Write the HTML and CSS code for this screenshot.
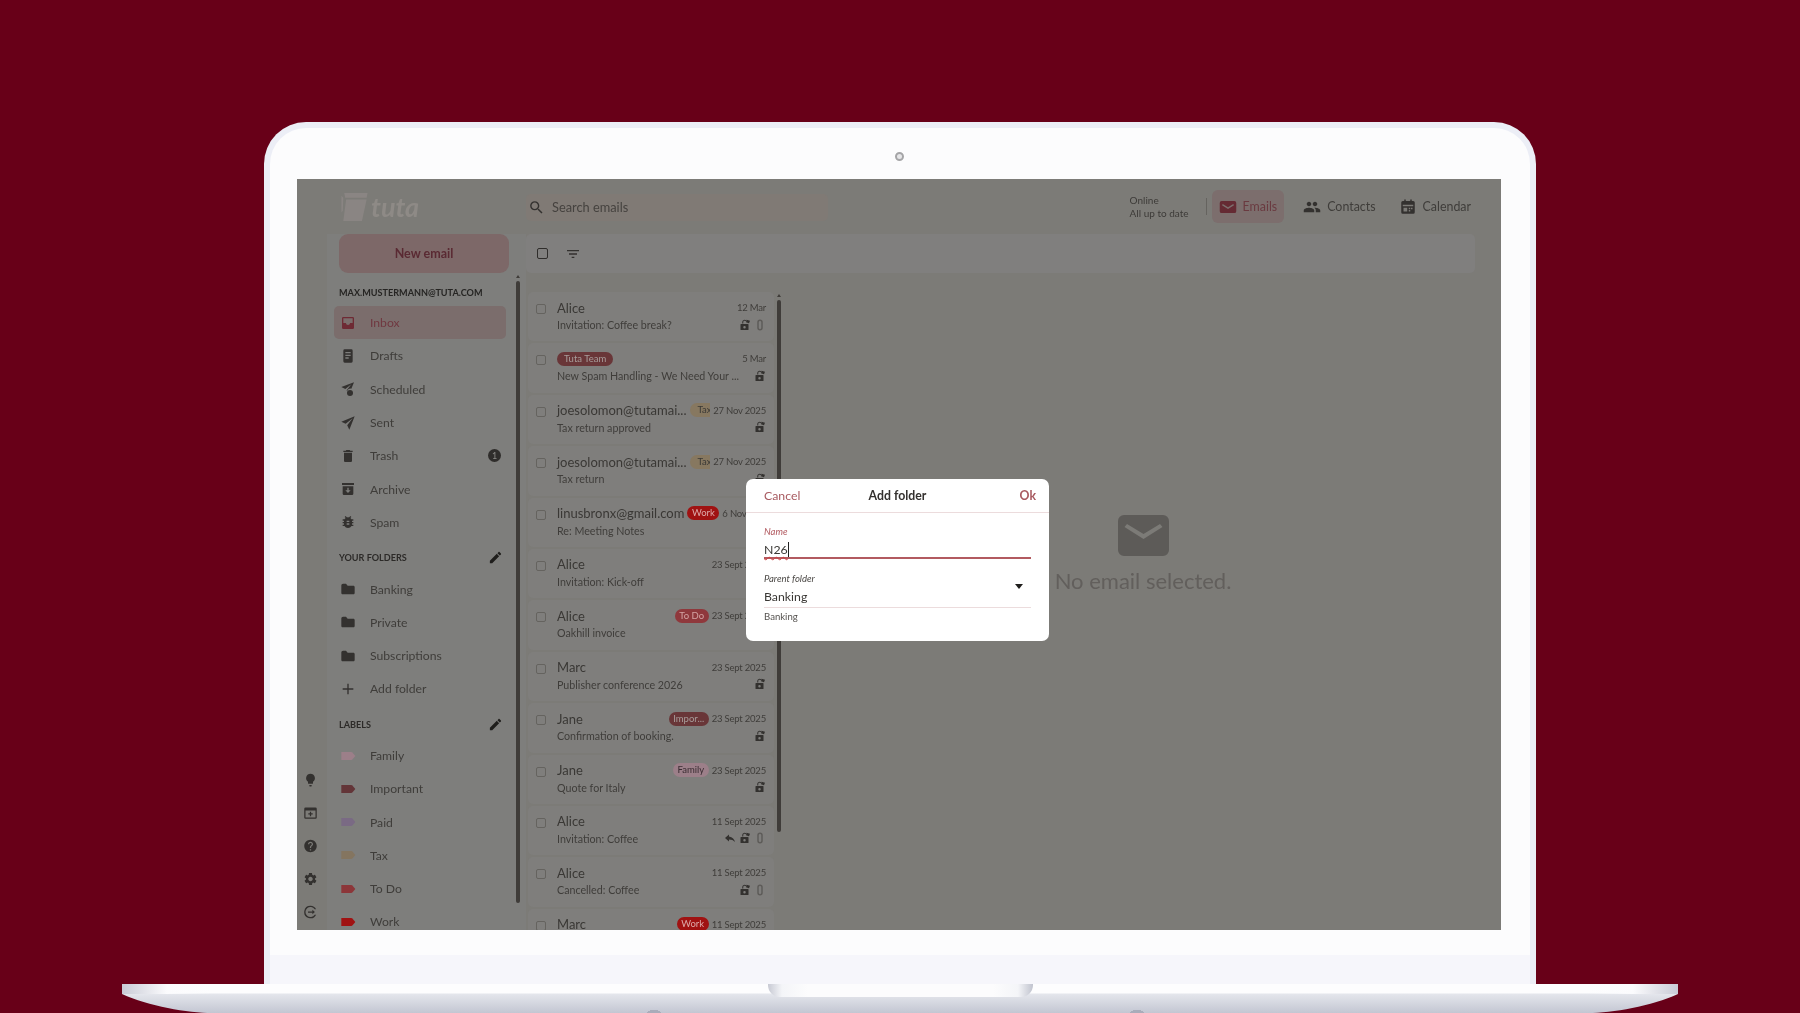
FILE: index.html
```html
<!DOCTYPE html>
<html lang="en">
<head>
    <meta charset="UTF-8">
    <title>Tuta - Add folder</title>
    <link rel="stylesheet" href="styles.css">
</head>
<body>
    <svg class="defs" width="0" height="0">
        <symbol id="i-inbox" viewBox="0 0 24 24"><path d="M5 3h14a2 2 0 0 1 2 2v14a2 2 0 0 1-2 2H5a2 2 0 0 1-2-2V5a2 2 0 0 1 2-2zm0 2v7h4c0 1.7 1.3 3 3 3s3-1.3 3-3h4V5z"/></symbol>
        <symbol id="i-draft" viewBox="0 0 24 24"><path fill-rule="evenodd" d="M7 2h10a2 2 0 0 1 2 2v16a2 2 0 0 1-2 2H7a2 2 0 0 1-2-2V4a2 2 0 0 1 2-2zm1 4v2h8V6zm0 4v2h8v-2zm0 4v2h5v-2z"/></symbol>
        <symbol id="i-sent" viewBox="0 0 24 24"><path d="M22 2 2 10l6.500 3.200L19 5l-8.200 10.500L14 22z"/></symbol>
        <symbol id="i-sched" viewBox="0 0 24 24"><path d="M21 2 2 9l6 3 9-7-7 9 .6 1.400A5 5 0 0 1 17 11.500z"/><circle cx="15" cy="18" r="4.500"/></symbol>
        <symbol id="i-trash" viewBox="0 0 24 24"><path d="M6 19c0 1.100.9 2 2 2h8c1.100 0 2-.9 2-2V7H6v12zM19 4h-3.500l-1-1h-5l-1 1H5v2h14V4z"/></symbol>
        <symbol id="i-archive" viewBox="0 0 24 24"><path fill-rule="evenodd" d="M3 3h18v3H3zM4 8h16v11a2 2 0 0 1-2 2H6a2 2 0 0 1-2-2zm7 2v4H8l4 4 4-4h-3v-4z"/></symbol>
        <symbol id="i-bug" viewBox="0 0 24 24"><path fill-rule="evenodd" d="M20 8h-2.810c-.45-.78-1.070-1.450-1.820-1.960L17 4.410 15.590 3l-2.170 2.170C12.960 5.060 12.490 5 12 5c-.49 0-.96.06-1.410.17L8.410 3 7 4.410l1.620 1.630C7.880 6.550 7.260 7.220 6.810 8H4v2h2.090c-.05.33-.09.66-.09 1v1H4v2h2v1c0 .34.04.67.09 1H4v2h2.810c1.040 1.790 2.970 3 5.190 3s4.150-1.210 5.190-3H20v-2h-2.090c.05-.33.09-.66.09-1v-1h2v-2h-2v-1c0-.34-.04-.67-.09-1H20V8zm-6 8h-4v-2h4zm0-4h-4v-2h4z"/></symbol>
        <symbol id="i-folder" viewBox="0 0 24 24"><path d="M9 4H4.500A2.500 2.500 0 0 0 2 6.500V18c0 1.100.9 2 2 2h16c1.100 0 2-.9 2-2V9c0-1.100-.9-2-2-2h-8.500z"/></symbol>
        <symbol id="i-plus" viewBox="0 0 24 24"><path d="M20 13h-7v7h-2v-7H4v-2h7V4h2v7h7z"/></symbol>
        <symbol id="i-pencil" viewBox="0 0 24 24"><path d="M3 17.250V21h3.750L17.810 9.940l-3.750-3.750L3 17.250zM20.710 7.040c.39-.39.39-1.020 0-1.410l-2.340-2.340c-.39-.39-1.020-.39-1.410 0l-1.830 1.830 3.750 3.750 1.830-1.830z"/></symbol>
        <symbol id="i-label" viewBox="0 0 24 24"><path d="M2 6h15c.6 0 1.100.3 1.500.7L23 12l-4.500 5.300c-.4.4-.9.7-1.500.7H2z"/></symbol>
        <symbol id="i-bulb" viewBox="0 0 24 24"><path d="M10 20h4l-.5 2.500h-3zM12 2a7 7 0 0 0-4 12.740V17c0 .55.45 1 1 1h6c.55 0 1-.45 1-1v-2.260A7 7 0 0 0 12 2z"/></symbol>
        <symbol id="i-window" viewBox="0 0 24 24"><path fill-rule="evenodd" d="M4 3h16a2 2 0 0 1 2 2v14a2 2 0 0 1-2 2H4a2 2 0 0 1-2-2V5a2 2 0 0 1 2-2zm0 5v11h16V8zm7 2h2v2.500h2.500v2H13V17h-2v-2.500H8.500v-2H11z"/></symbol>
        <symbol id="i-help" viewBox="0 0 24 24"><path d="M12 2C6.480 2 2 6.480 2 12s4.480 10 10 10 10-4.480 10-10S17.520 2 12 2zm1 17h-2v-2h2v2zm2.070-7.750l-.9.92C13.450 12.900 13 13.500 13 15h-2v-.5c0-1.100.45-2.100 1.170-2.830l1.240-1.260c.37-.36.59-.86.59-1.410 0-1.100-.9-2-2-2s-2 .9-2 2H8c0-2.210 1.790-4 4-4s4 1.790 4 4c0 .88-.36 1.680-.93 2.250z"/></symbol>
        <symbol id="i-gear" viewBox="0 0 24 24"><path d="M19.140 12.940c.04-.3.06-.61.06-.94 0-.32-.02-.64-.07-.94l2.030-1.580c.18-.14.23-.41.12-.61l-1.920-3.320c-.12-.22-.37-.29-.59-.22l-2.390.96c-.5-.38-1.030-.7-1.620-.94l-.36-2.540c-.04-.24-.24-.41-.48-.41h-3.840c-.24 0-.43.17-.47.41l-.36 2.540c-.59.24-1.130.57-1.620.94l-2.390-.96c-.22-.08-.47 0-.59.22L2.740 8.870c-.12.21-.08.47.12.61l2.030 1.580c-.05.3-.09.63-.09.94s.02.64.07.94l-2.030 1.580c-.18.14-.23.41-.12.61l1.920 3.320c.12.22.37.29.59.22l2.390-.96c.5.38 1.030.7 1.620.94l.36 2.540c.05.24.24.41.48.41h3.840c.24 0 .44-.17.47-.41l.36-2.540c.59-.24 1.130-.56 1.620-.94l2.390.96c.22.08.47 0 .59-.22l1.920-3.320c.12-.22.07-.47-.12-.61l-2.010-1.580zM12 15.600c-1.980 0-3.600-1.620-3.600-3.600s1.620-3.600 3.600-3.600 3.600 1.620 3.600 3.600-1.620 3.600-3.600 3.600z"/></symbol>
        <symbol id="i-logout" viewBox="0 0 24 24"><path d="M12 2a10 10 0 1 0 9 14.300h-2.300A8 8 0 1 1 18.700 7.700H21A10 10 0 0 0 12 2zM15 8.500V11H8v2h7v2.500l4-3.500z"/></symbol>
        <symbol id="i-lock" viewBox="0 0 24 24"><path fill-rule="evenodd" d="M4 10h14a1 1 0 0 1 1 1v10a1 1 0 0 1-1 1H4a1 1 0 0 1-1-1V11a1 1 0 0 1 1-1zm7 4a2.500 2.500 0 1 0 0 5 2.500 2.500 0 0 0 0-5zM6.500 9V6a4.500 4.500 0 0 1 8-2.800L13 4.600A2.500 2.500 0 0 0 8.500 6v3zM15 1.500l7 2-2 5-6-2z"/></symbol>
        <symbol id="i-clip" viewBox="0 0 24 24"><path fill-rule="evenodd" d="M12 1a5.500 5.500 0 0 0-5.500 5.500v11a5.500 5.500 0 0 0 11 0v-11A5.500 5.500 0 0 0 12 1zm2.500 16.500a2.500 2.500 0 0 1-5 0v-11a2.500 2.500 0 0 1 5 0z"/></symbol>
        <symbol id="i-reply" viewBox="0 0 24 24"><path d="M10 9V5l-8 7 8 7v-4.100c5 0 9 1.600 12 5.100-1-5-5-10-12-11z"/></symbol>
        <symbol id="i-search" viewBox="0 0 24 24"><path d="M15.500 14h-.79l-.28-.27A6.470 6.470 0 0 0 16 9.500 6.500 6.500 0 1 0 9.500 16c1.610 0 3.090-.59 4.230-1.570l.27.28v.79l5 4.990L20.490 19l-4.990-5zm-6 0C7.010 14 5 11.990 5 9.500S7.010 5 9.500 5 14 7.010 14 9.500 11.990 14 9.500 14z"/></symbol>
        <symbol id="i-filter" viewBox="0 0 24 24"><path d="M10 18h4v-2h-4v2zM3 6v2h18V6H3zm3 7h12v-2H6v2z"/></symbol>
        <symbol id="i-mail" viewBox="0 0 24 24"><path fill-rule="evenodd" d="M3.500 4h17A2.500 2.500 0 0 1 23 6.500v11a2.500 2.500 0 0 1-2.500 2.500h-17A2.500 2.500 0 0 1 1 17.500v-11A2.500 2.500 0 0 1 3.500 4zM5 8 4 9.500l8 5 8-5L19 8l-7 4.300z"/></symbol>
        <symbol id="i-contacts" viewBox="0 0 24 24"><path d="M16 11c1.660 0 2.990-1.340 2.990-3S17.660 5 16 5c-1.660 0-3 1.340-3 3s1.340 3 3 3zm-8 0c1.660 0 2.990-1.340 2.990-3S9.660 5 8 5C6.340 5 5 6.340 5 8s1.340 3 3 3zm0 2c-2.330 0-7 1.170-7 3.500V19h14v-2.500c0-2.330-4.670-3.500-7-3.500zm8 0c-.29 0-.62.02-.97.05 1.160.84 1.970 1.970 1.970 3.450V19h6v-2.500c0-2.330-4.670-3.500-7-3.500z"/></symbol>
        <symbol id="i-calendar" viewBox="0 0 24 24"><path fill-rule="evenodd" d="M7 2h2v2h6V2h2v2h2a2 2 0 0 1 2 2v13a2 2 0 0 1-2 2H5a2 2 0 0 1-2-2V6a2 2 0 0 1 2-2h2zM5 9v2h14V9zm8 4v2h2v-2zm3 0v2h2v-2zm-3 3v2h2v-2zm-7-3v5h5v-5z"/></symbol>
    </svg>

    <div class="laptop">
        <div class="lid">
            <div class="lid-inner">
                <div class="camera"></div>
                <div class="screen">
                    <header class="topbar">
                        <div class="logo">
                            <svg class="logo-box" viewBox="0 0 28 30"><path d="M3 0h25l-1 5H4zM5 7h22l-5 23H2zM0 3l2 2-.5 14L0 21z"/></svg>
                            <span class="logo-text">tuta</span>
                        </div>
                        <div class="search">
                            <svg class="icon"><use href="#i-search"/></svg>
                            <span>Search emails</span>
                        </div>
                        <div class="status">
                            <div>Online</div>
                            <div>All up to date</div>
                        </div>
                        <div class="tab-divider"></div>
                        <nav class="tabs">
                            <a class="tab active"><svg class="icon"><use href="#i-mail"/></svg>Emails</a>
                            <a class="tab"><svg class="icon"><use href="#i-contacts"/></svg>Contacts</a>
                            <a class="tab"><svg class="icon"><use href="#i-calendar"/></svg>Calendar</a>
                        </nav>
                    </header>

                    <div class="main">
                        <div class="rail">
                            <svg class="icon"><use href="#i-bulb"/></svg>
                            <svg class="icon"><use href="#i-window"/></svg>
                            <svg class="icon"><use href="#i-help"/></svg>
                            <svg class="icon"><use href="#i-gear"/></svg>
                            <svg class="icon"><use href="#i-logout"/></svg>
                        </div>

                        <aside class="sidebar">
                            <div class="new-email">New email</div>
                            <div class="sidebar-title">MAX.MUSTERMANN@TUTA.COM</div>
                            <div class="nav-row active"><svg class="icon"><use href="#i-inbox"/></svg>Inbox</div>
                            <div class="nav-row"><svg class="icon"><use href="#i-draft"/></svg>Drafts</div>
                            <div class="nav-row"><svg class="icon"><use href="#i-sched"/></svg>Scheduled</div>
                            <div class="nav-row"><svg class="icon"><use href="#i-sent"/></svg>Sent</div>
                            <div class="nav-row"><svg class="icon"><use href="#i-trash"/></svg>Trash<span class="count">1</span></div>
                            <div class="nav-row"><svg class="icon"><use href="#i-archive"/></svg>Archive</div>
                            <div class="nav-row"><svg class="icon"><use href="#i-bug"/></svg>Spam</div>
                            <div class="sidebar-head">YOUR FOLDERS<svg class="icon"><use href="#i-pencil"/></svg></div>
                            <div class="nav-row"><svg class="icon"><use href="#i-folder"/></svg>Banking</div>
                            <div class="nav-row"><svg class="icon"><use href="#i-folder"/></svg>Private</div>
                            <div class="nav-row"><svg class="icon"><use href="#i-folder"/></svg>Subscriptions</div>
                            <div class="nav-row"><svg class="icon"><use href="#i-plus"/></svg>Add folder</div>
                            <div class="sidebar-head">LABELS<svg class="icon"><use href="#i-pencil"/></svg></div>
                            <div class="nav-row"><svg class="icon family"><use href="#i-label"/></svg>Family</div>
                            <div class="nav-row"><svg class="icon important"><use href="#i-label"/></svg>Important</div>
                            <div class="nav-row"><svg class="icon paid"><use href="#i-label"/></svg>Paid</div>
                            <div class="nav-row"><svg class="icon tax"><use href="#i-label"/></svg>Tax</div>
                            <div class="nav-row"><svg class="icon todo"><use href="#i-label"/></svg>To Do</div>
                            <div class="nav-row"><svg class="icon work"><use href="#i-label"/></svg>Work</div>
                            <div class="scroll-thumb"></div>
                        </aside>

                        <div class="content">
                            <div class="toolbar">
                                <span class="check big"></span>
                                <svg class="icon"><use href="#i-filter"/></svg>
                            </div>
                            <div class="panes">
                                <section class="list">
                                    <div class="mail">
                                        <span class="check"></span>
                                        <div class="mail-body">
                                            <div class="line"><span class="sender">Alice</span><span class="date">12 Mar</span></div>
                                            <div class="line"><span class="subject">Invitation: Coffee break?</span><svg class="icon"><use href="#i-lock"/></svg><svg class="icon clip"><use href="#i-clip"/></svg></div>
                                        </div>
                                    </div>
                                    <div class="mail">
                                        <span class="check"></span>
                                        <div class="mail-body">
                                            <div class="line"><span class="pill important first">Tuta Team</span><span class="date">5 Mar</span></div>
                                            <div class="line"><span class="subject">New Spam Handling - We Need Your ...</span><svg class="icon"><use href="#i-lock"/></svg></div>
                                        </div>
                                    </div>
                                    <div class="mail">
                                        <span class="check"></span>
                                        <div class="mail-body">
                                            <div class="line"><span class="sender">joesolomon@tutamai...</span><span class="pill tax cut">Tax</span><span class="date">27 Nov 2025</span></div>
                                            <div class="line"><span class="subject">Tax return approved</span><svg class="icon"><use href="#i-lock"/></svg></div>
                                        </div>
                                    </div>
                                    <div class="mail">
                                        <span class="check"></span>
                                        <div class="mail-body">
                                            <div class="line"><span class="sender">joesolomon@tutamai...</span><span class="pill tax cut">Tax</span><span class="date">27 Nov 2025</span></div>
                                            <div class="line"><span class="subject">Tax return</span><svg class="icon"><use href="#i-lock"/></svg></div>
                                        </div>
                                    </div>
                                    <div class="mail">
                                        <span class="check"></span>
                                        <div class="mail-body">
                                            <div class="line"><span class="sender">linusbronx@gmail.com</span><span class="pill work">Work</span><span class="date">6 Nov 2025</span></div>
                                            <div class="line"><span class="subject">Re: Meeting Notes</span><svg class="icon"><use href="#i-lock"/></svg></div>
                                        </div>
                                    </div>
                                    <div class="mail">
                                        <span class="check"></span>
                                        <div class="mail-body">
                                            <div class="line"><span class="sender">Alice</span><span class="date">23 Sept 2025</span></div>
                                            <div class="line"><span class="subject">Invitation: Kick-off</span><svg class="icon"><use href="#i-lock"/></svg></div>
                                        </div>
                                    </div>
                                    <div class="mail">
                                        <span class="check"></span>
                                        <div class="mail-body">
                                            <div class="line"><span class="sender">Alice</span><span class="pill todo">To Do</span><span class="date">23 Sept 2025</span></div>
                                            <div class="line"><span class="subject">Oakhill invoice</span><svg class="icon"><use href="#i-lock"/></svg></div>
                                        </div>
                                    </div>
                                    <div class="mail">
                                        <span class="check"></span>
                                        <div class="mail-body">
                                            <div class="line"><span class="sender">Marc</span><span class="date">23 Sept 2025</span></div>
                                            <div class="line"><span class="subject">Publisher conference 2026</span><svg class="icon"><use href="#i-lock"/></svg></div>
                                        </div>
                                    </div>
                                    <div class="mail">
                                        <span class="check"></span>
                                        <div class="mail-body">
                                            <div class="line"><span class="sender">Jane</span><span class="pill important">Impor...</span><span class="date">23 Sept 2025</span></div>
                                            <div class="line"><span class="subject">Confirmation of booking.</span><svg class="icon"><use href="#i-lock"/></svg></div>
                                        </div>
                                    </div>
                                    <div class="mail">
                                        <span class="check"></span>
                                        <div class="mail-body">
                                            <div class="line"><span class="sender">Jane</span><span class="pill family">Family</span><span class="date">23 Sept 2025</span></div>
                                            <div class="line"><span class="subject">Quote for Italy</span><svg class="icon"><use href="#i-lock"/></svg></div>
                                        </div>
                                    </div>
                                    <div class="mail">
                                        <span class="check"></span>
                                        <div class="mail-body">
                                            <div class="line"><span class="sender">Alice</span><span class="date">11 Sept 2025</span></div>
                                            <div class="line"><span class="subject">Invitation: Coffee</span><svg class="icon"><use href="#i-reply"/></svg><svg class="icon"><use href="#i-lock"/></svg><svg class="icon clip"><use href="#i-clip"/></svg></div>
                                        </div>
                                    </div>
                                    <div class="mail">
                                        <span class="check"></span>
                                        <div class="mail-body">
                                            <div class="line"><span class="sender">Alice</span><span class="date">11 Sept 2025</span></div>
                                            <div class="line"><span class="subject">Cancelled: Coffee</span><svg class="icon"><use href="#i-lock"/></svg><svg class="icon clip"><use href="#i-clip"/></svg></div>
                                        </div>
                                    </div>
                                    <div class="mail">
                                        <span class="check"></span>
                                        <div class="mail-body">
                                            <div class="line"><span class="sender">Marc</span><span class="pill work">Work</span><span class="date">11 Sept 2025</span></div>
                                        </div>
                                    </div>
                                    <div class="scroll-thumb"></div>
                                </section>
                                <section class="detail">
                                    <svg class="detail-icon" viewBox="0 0 51 41"><path fill-rule="evenodd" d="M6 0h39a6 6 0 0 1 6 6v29a6 6 0 0 1-6 6H6a6 6 0 0 1-6-6V6a6 6 0 0 1 6-6zm3 9-2.500 3L25.500 24 44.500 12 42 9 25.500 19z"/></svg>
                                    <p>No email selected.</p>
                                </section>
                            </div>
                        </div>
                    </div>

                    <div class="dialog">
                        <div class="dialog-head">
                            <a>Cancel</a>
                            <strong>Add folder</strong>
                            <a class="ok">Ok</a>
                        </div>
                        <div class="dialog-body">
                            <div class="field focus">
                                <label>Name</label>
                                <div class="value"><span class="typed">N26</span><span class="caret"></span></div>
                            </div>
                            <div class="field">
                                <label>Parent folder</label>
                                <div class="value">Banking<span class="arrow"></span></div>
                            </div>
                            <div class="helper">Banking</div>
                        </div>
                    </div>
                </div>
                <div class="chin"></div>
            </div>
        </div>
        <div class="base"><div class="notch"></div></div>
    </div>
</body>
</html>
```

FILE: styles.css
```css
* {
    box-sizing: border-box;
    margin: 0;
    padding: 0;
}

body {
    background: #680018;
    font-family: Lato, "Noto Sans", sans-serif;
    color: #3a3835;
    height: 1013px;
    overflow: hidden;
}

.defs {
    position: absolute;
}

.icon {
    width: 16px;
    height: 16px;
    fill: #33312f;
    flex: none;
}

.laptop {
    display: flex;
    flex-direction: column;
    align-items: center;
    padding-top: 122px;
}

.lid {
    width: 1272px;
    height: 862px;
    background: #eceef6;
    border-radius: 42px 42px 0 0;
    padding: 6px 6px 0;
}

.lid-inner {
    height: 100%;
    background: #fcfcfd;
    border-radius: 36px 36px 0 0;
    padding: 51px 29px 0 27px;
    position: relative;
    display: flex;
    flex-direction: column;
}

.camera {
    position: absolute;
    top: 24px;
    left: 625px;
    width: 9px;
    height: 9px;
    border-radius: 50%;
    border: 2px solid #a5a5a7;
    background: #e6e6e8;
}

.screen {
    height: 751px;
    background: #7c7b77;
    position: relative;
    overflow: hidden;
    filter: blur(0.5px);
}

.chin {
    margin-top: 25px;
    flex: 1;
    margin-left: -27px;
    margin-right: -29px;
    background: #f6f6fb;
}

.base {
    width: 1556px;
    height: 29px;
    display: flex;
    justify-content: center;
    background:
        radial-gradient(ellipse 7px 3px at 532px 29px, #a9acba 0, #a9acba 99%, transparent 100%),
        radial-gradient(ellipse 7px 3px at 1015px 29px, #a9acba 0, #a9acba 99%, transparent 100%),
        linear-gradient(90deg, #c9cbd6 0, #fbfbfd 45px, transparent 90px, transparent 1466px, #fbfbfd 1511px, #c9cbd6 1556px) top / 100% 10px no-repeat,
        linear-gradient(180deg, #fdfdfe 0, #fdfdfe 9px, #e4e6ec 10px, #c3c6d2 29px);
    clip-path: path("M0 0H1556V10C1530 22 1490 29 1466 29H90C66 29 26 22 0 10Z");
}

.notch {
    width: 265px;
    height: 13px;
    border-radius: 0 0 12px 12px;
    background: linear-gradient(90deg, #c8cad4 0, #f4f5f8 14px, #fcfcfd 40px, #fcfcfd 225px, #f4f5f8 250px, #c0c3ce 265px);
}

/* top bar */
.topbar {
    height: 55px;
    display: flex;
    align-items: center;
}

.logo {
    width: 229px;
    padding-left: 44px;
    display: flex;
    align-items: center;
    gap: 3px;
}

.logo-box {
    width: 27px;
    height: 28px;
    fill: #8a8583;
}

.logo-text {
    font-style: italic;
    font-weight: 700;
    font-size: 27px;
    line-height: 28px;
    color: #8e8a86;
}

.search {
    width: 302px;
    height: 27px;
    margin-top: 1px;
    background: #807a75;
    border-radius: 5px;
    display: flex;
    align-items: center;
    gap: 7px;
    padding-left: 0;
    font-size: 12.8px;
    color: #45423f;
}

.search .icon {
    margin-left: 2px;
    width: 17px;
    height: 17px;
}

.status {
    margin-left: auto;
    font-size: 10px;
    line-height: 13px;
    width: 76px;
    color: #3d3b38;
}

.tab-divider {
    width: 1px;
    height: 17px;
    background: #65635f;
    margin-right: 5px;
}

.tabs {
    display: flex;
    align-items: center;
    padding-right: 23px;
}

.tab {
    height: 33px;
    padding: 0 7px;
    display: flex;
    align-items: center;
    gap: 6px;
    font-size: 12.4px;
    color: #3f3d3a;
    border-radius: 6px;
    margin-right: 9px;
}

.tab .icon {
    width: 18px;
    height: 18px;
}

.tab:last-child {
    margin-right: 0;
}

.tab.active {
    background: #7c6e6d;
    color: #6a3a40;
    margin-right: 12px;
}

.tab.active .icon {
    fill: #652a33;
}

/* main columns */
.main {
    height: 696px;
    display: flex;
}

.rail {
    width: 30px;
    display: flex;
    flex-direction: column;
    justify-content: flex-end;
    align-items: center;
    gap: 17px;
    padding: 0 3px 10px 0;
}

.rail .icon {
    width: 15px;
    height: 16px;
}

.sidebar {
    width: 199px;
    background: #7e7e7c;
    padding: 0 16px 0 7px;
    position: relative;
}

.new-email {
    height: 39px;
    margin: 0 1px 0 5px;
    background: #7d6868;
    border-radius: 9px;
    display: flex;
    align-items: center;
    justify-content: center;
    font-size: 12.5px;
    font-weight: 700;
    color: #5a2a33;
}

.sidebar-title {
    margin: 12px 0 0 5px;
    height: 21px;
    font-size: 9.1px;
    font-weight: 700;
    line-height: 15px;
    color: #262523;
    white-space: nowrap;
}

.nav-row {
    height: 33.3px;
    display: flex;
    align-items: center;
    padding-left: 6px;
    gap: 14px;
    font-size: 12.2px;
    color: #3f3d3a;
    border-radius: 5px;
    margin-right: 4px;
}

.nav-row .icon {
    width: 16px;
    height: 16px;
}

.nav-row.active {
    background: #7b6d6c;
    color: #703840;
}

.nav-row.active .icon {
    fill: #6e2a34;
}

.nav-row .count {
    margin-left: auto;
    margin-right: 5px;
    width: 13px;
    height: 13px;
    border-radius: 50%;
    background: #2f2d2b;
    color: #8a8986;
    font-size: 9px;
    line-height: 13px;
    text-align: center;
}

.sidebar-head {
    height: 33.3px;
    padding: 4px 7.5px 0 5px;
    display: flex;
    align-items: center;
    justify-content: space-between;
    font-size: 9.1px;
    font-weight: 700;
    color: #2c2a28;
}

.sidebar-head .icon {
    width: 15px;
    height: 15px;
    fill: #1f1e1c;
}

.nav-row .family { fill: #9c7f89; }
.nav-row .important { fill: #633538; }
.nav-row .paid { fill: #7a6a84; }
.nav-row .tax { fill: #847560; }
.nav-row .todo { fill: #8c3639; }
.nav-row .work { fill: #a01212; }

.scroll-thumb {
    position: absolute;
    width: 4px;
    background: #3f3c39;
    border-radius: 2px;
}

.scroll-thumb::before {
    content: "";
    position: absolute;
    top: -6px;
    left: 0;
    border-left: 2px solid transparent;
    border-right: 2px solid transparent;
    border-bottom: 3px solid #3f3c39;
}

.sidebar .scroll-thumb {
    top: 47px;
    left: 189px;
    height: 622px;
}

/* toolbar and lists */
.content {
    flex: 1;
    display: flex;
    flex-direction: column;
    min-width: 0;
}

.toolbar {
    height: 39px;
    margin-right: 26px;
    background: #807f7e;
    border-radius: 5px;
    display: flex;
    align-items: center;
    gap: 17px;
    padding-left: 11px;
    flex: none;
}

.check {
    width: 10px;
    height: 10px;
    border: 1.5px solid #65635f;
    border-radius: 2px;
    flex: none;
    margin-top: 5px;
}

.check.big {
    width: 11px;
    height: 11px;
    border-color: #2f2d2b;
    margin-top: 0;
}

.panes {
    flex: 1;
    display: flex;
    min-height: 0;
}

.list {
    width: 256px;
    padding: 19px 8px 0 2px;
    position: relative;
    overflow: hidden;
}

.list .scroll-thumb {
    top: 27px;
    left: 251px;
    height: 532px;
}

.mail {
    height: 49.4px;
    margin-bottom: 2px;
    background: #7f7e7c;
    border-radius: 5px;
    display: flex;
    padding: 7px 8px 0 8px;
    gap: 11px;
}

.mail-body {
    flex: 1;
    min-width: 0;
}

.line {
    height: 17px;
    display: flex;
    align-items: center;
    gap: 3px;
}

.sender {
    font-size: 13px;
    color: #3a3835;
    margin-right: auto;
    white-space: nowrap;
}

.subject {
    font-size: 10.7px;
    color: #3f3d3a;
    margin-right: auto;
    white-space: nowrap;
}

.date {
    font-size: 9.5px;
    letter-spacing: -0.2px;
    color: #3f3d3a;
    white-space: nowrap;
}

.line .icon {
    width: 12px;
    height: 12px;
}

.line .clip {
    fill: #5e5c59;
}

.pill {
    height: 14px;
    line-height: 13px;
    padding: 0 4.5px;
    border-radius: 7px;
    font-size: 9.5px;
    color: #a89d9b;
    white-space: nowrap;
}

.pill.first {
    margin-right: auto;
    padding: 0 7px;
}

.pill.important { background: #693638; }
.pill.tax { background: #877860; color: #3a3835; }
.pill.work { background: #a01212; color: #dcaaaa; }
.pill.todo { background: #8f383c; color: #d4a4a4; }
.pill.family { background: #9c7f89; color: #3a2c32; }

.pill.cut {
    width: 21px;
    padding: 0 0 0 8px;
    overflow: hidden;
    border-radius: 7px 0 0 7px;
}

.detail {
    flex: 1;
    display: flex;
    flex-direction: column;
    align-items: center;
    padding: 242px 0 0 3px;
}

.detail-icon {
    width: 51px;
    height: 41px;
    fill: #5d5b58;
}

.detail p {
    margin-top: 10px;
    font-size: 22px;
    line-height: 30px;
    color: #625f5c;
}

/* dialog */
.dialog {
    position: absolute;
    left: 449px;
    top: 300px;
    width: 303px;
    height: 162px;
    background: #fff;
    border-radius: 7px;
}

.dialog-head {
    height: 34px;
    padding: 0 13px 0 18px;
    border-bottom: 1px solid #ecdcdd;
    display: grid;
    grid-template-columns: 1fr auto 1fr;
    align-items: center;
    font-size: 12.3px;
    color: #a85a60;
}

.dialog-head strong {
    font-weight: 700;
    color: #33302e;
    margin-right: 5px;
}

.dialog-head .ok {
    font-weight: 700;
    justify-self: end;
}

.dialog-body {
    padding: 12px 18px 0;
}

.field {
    height: 36px;
    position: relative;
    border-bottom: 1px solid #ecdcdd;
}

.field.focus {
    height: 34px;
    border-bottom: 2px solid #b25a60;
    margin-bottom: 13px;
}

.field label {
    display: block;
    font-size: 9.5px;
    line-height: 13px;
    font-style: italic;
    color: #4a4744;
}

.field.focus label {
    color: #b25a60;
}

.value {
    font-size: 12.3px;
    line-height: 19px;
    color: #3a3835;
    display: flex;
    align-items: center;
}

.field .value {
    height: 19px;
    margin-top: 2px;
}

.typed {
    text-decoration: underline wavy #d04040 1px;
    text-underline-offset: 2px;
}

.caret {
    width: 1px;
    height: 15px;
    background: #222;
}

.arrow {
    position: absolute;
    right: 8px;
    top: 12px;
    border-left: 4.5px solid transparent;
    border-right: 4.5px solid transparent;
    border-top: 5px solid #1f1e1c;
}

.helper {
    margin-top: 3px;
    font-size: 9.6px;
    color: #55524f;
}
```
